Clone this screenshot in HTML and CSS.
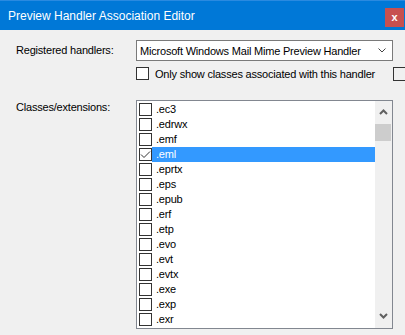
FILE: index.html
```html
<!DOCTYPE HTML>
<html>
    <head>
        <meta charset="UTF-8">
        <title>Preview Handler Association Editor</title>
        <link rel="stylesheet" href="styles.css">
    </head>
    <body>
        <div id="wrap">
            <div class="titlebar">
                <p class="caption">Preview Handler Association Editor</p>
                <div class="close">x</div>
            </div>
            <div class="content">
                <div class="row">
                    <span class="label">Registered handlers:</span>
                    <div class="combo">
                        <span>Microsoft Windows Mail Mime Preview Handler</span>
                        <svg class="drop" width="8" height="5" viewBox="0 0 8 5"><path d="M0.5 0.5 L4 4 L7.5 0.5" fill="none" stroke="#444" stroke-width="1"/></svg>
                    </div>
                </div>
                <div class="opt">
                    <span class="box"></span>
                    <span class="opt-text">Only show classes associated with this handler</span>
                    <span class="stub"></span>
                </div>
                <div class="row top">
                    <span class="label">Classes/extensions:</span>
                    <div class="list">
                        <ul class="items">
                            <li><span class="box"></span><span class="name">.ec3</span></li>
                            <li><span class="box"></span><span class="name">.edrwx</span></li>
                            <li><span class="box"></span><span class="name">.emf</span></li>
                            <li class="sel"><span class="box">
                                <svg width="11" height="11" viewBox="0 0 11 11"><path d="M1 5.5 L4 8.5 L10 2.5" fill="none" stroke="#333" stroke-width="1"/></svg>
                            </span><span class="name">.eml</span></li>
                            <li><span class="box"></span><span class="name">.eprtx</span></li>
                            <li><span class="box"></span><span class="name">.eps</span></li>
                            <li><span class="box"></span><span class="name">.epub</span></li>
                            <li><span class="box"></span><span class="name">.erf</span></li>
                            <li><span class="box"></span><span class="name">.etp</span></li>
                            <li><span class="box"></span><span class="name">.evo</span></li>
                            <li><span class="box"></span><span class="name">.evt</span></li>
                            <li><span class="box"></span><span class="name">.evtx</span></li>
                            <li><span class="box"></span><span class="name">.exe</span></li>
                            <li><span class="box"></span><span class="name">.exp</span></li>
                            <li><span class="box"></span><span class="name">.exr</span></li>
                        </ul>
                        <div class="scroll">
                            <div class="arrow">
                                <svg width="9" height="6" viewBox="0 0 9 6"><path d="M1 5 L4.5 1.5 L8 5" fill="none" stroke="#606060" stroke-width="2"/></svg>
                            </div>
                            <div class="thumb"></div>
                            <div class="arrow down">
                                <svg width="9" height="6" viewBox="0 0 9 6"><path d="M1 1 L4.5 4.5 L8 1" fill="none" stroke="#606060" stroke-width="2"/></svg>
                            </div>
                        </div>
                    </div>
                </div>
            </div>
        </div>
    </body>
</html>
```

FILE: styles.css
```css
body{margin:0;font-family: "Liberation Sans","DejaVu Sans",sans-serif;font-size:11px;letter-spacing:-0.2px;color:#000;}
p,ul,li{margin:0;padding:0;list-style:none;}

#wrap{
    width: 405px;
    height: 335px;
    overflow: hidden;
    white-space: nowrap;
    background-color: #f0f0f0;
}
.titlebar{
    display: flex;
    align-items: center;
    height: 29px;
    border-top: 1px solid #2a8ae0;
    background-color: #0078d7;
}
.caption{
    flex: 1;
    padding-left: 8px;
    color: #fff;
    font-size: 12px;
    letter-spacing: 0;
}
.close{
    align-self: flex-end;
    width: 19px;
    height: 19px;
    margin: 0 1px 3px 0;
    line-height: 18px;
    text-align: center;
    background: #c75050;
    color: #fff;
    font-size: 11px;
    font-weight: bold;
}
.content{
    padding: 10px 0 0 16px;
}
.row{
    display: flex;
    align-items: center;
}
.row.top{
    align-items: flex-start;
    margin-top: 20px;
}
.label{
    width: 120px;
    line-height: 15px;
}
.combo{
    display: flex;
    align-items: center;
    box-sizing: border-box;
    width: 257px;
    height: 21px;
    padding: 0 6px 0 3px;
    border: 1px solid #7a7a7a;
    background: #fff;
}
.combo span{
    flex: 1;
}
.opt{
    display: flex;
    align-items: center;
    height: 13px;
    margin: 6px 0 0 120px;
}
.box{
    display: flex;
    align-items: center;
    justify-content: center;
    flex: none;
    box-sizing: border-box;
    width: 13px;
    height: 13px;
    border: 1px solid #333;
    background: #fff;
}
.opt-text{
    margin-left: 6px;
}
.stub{
    flex: none;
    box-sizing: border-box;
    width: 12px;
    height: 14px;
    margin-left: auto;
    border: 1px solid #333;
    border-right: none;
    background: #f0f0f0;
}
.list{
    display: flex;
    box-sizing: border-box;
    width: 257px;
    height: 229px;
    border: 1px solid #828790;
    background: #fff;
}
.items{
    flex: 1;
    padding-top: 1px;
}
.items li{
    display: flex;
    align-items: center;
    height: 15px;
    padding-left: 2px;
}
.items .name{
    flex: 1;
    height: 15px;
    line-height: 15px;
    padding-left: 4px;
}
.items li.sel .name{
    background: #3399ff;
    color: #fff;
}
.scroll{
    display: flex;
    flex-direction: column;
    width: 17px;
    background: #f0f0f0;
}
.arrow{
    display: flex;
    align-items: center;
    justify-content: center;
    height: 17px;
    padding-top: 2px;
}
.arrow.down{
    margin-top: auto;
    padding: 0 0 4px;
}
.thumb{
    height: 17px;
    margin: 4px 1px 0 0;
    background: #cdcdcd;
}
```
